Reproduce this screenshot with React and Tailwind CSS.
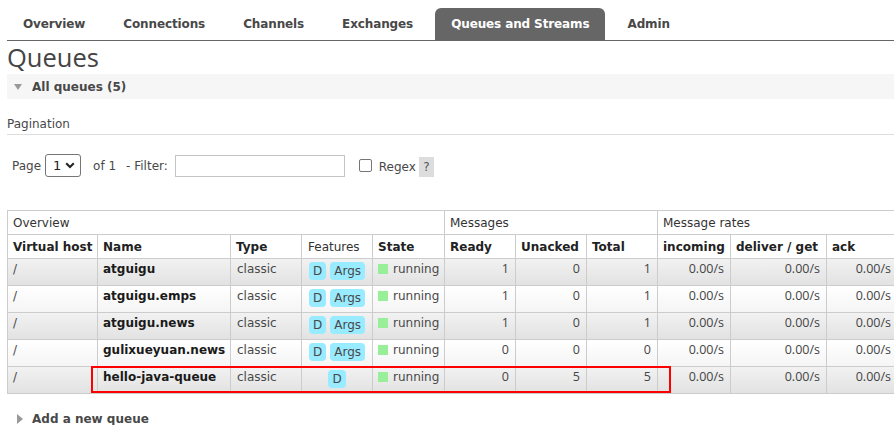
import React from "react";

const tabs = ["Overview", "Connections", "Channels", "Exchanges", "Queues and Streams", "Admin"];

const rows = [
  { name: "atguigu", args: true, ready: 1, unacked: 0, total: 1 },
  { name: "atguigu.emps", args: true, ready: 1, unacked: 0, total: 1 },
  { name: "atguigu.news", args: true, ready: 1, unacked: 0, total: 1 },
  { name: "gulixueyuan.news", args: true, ready: 0, unacked: 0, total: 0 },
  { name: "hello-java-queue", args: false, ready: 0, unacked: 5, total: 5 },
];

const cols = "grid-cols-[90px_133px_71px_71px_72px_71px_71px_71px_73px_96px_71px]";

function Badge({ children }) {
  return (
    <span className="inline-flex h-[18px] items-center rounded-[4px] bg-[#99ebff] px-[4px] text-[12px] leading-[18px] text-[#484848]">
      {children}
    </span>
  );
}

export default function App() {
  const sans = { fontFamily: '"DejaVu Sans", Verdana, sans-serif' };
  return (
    <div
      className="h-[425px] w-[894px] overflow-hidden bg-white text-[12px] text-[#484848]"
      style={sans}
    >
      <div className="pl-[7px]">
        {/* Tabs */}
        <div className="mt-[8px] flex h-[33px] gap-[6px] border-b border-[#666]">
          {tabs.map((t) => {
            const active = t === "Queues and Streams";
            return (
              <div
                key={t}
                className={
                  "h-[32px] px-[16px] text-[12px] font-bold leading-[32px] tracking-[-0.12px] " +
                  (active ? "rounded-t-[6px] bg-[#666] text-white" : "text-[#484848]")
                }
              >
                {t}
              </div>
            );
          })}
        </div>

        {/* Heading */}
        <h1
          className="h-[33px] text-[25.5px] font-normal leading-[33px] text-[#444]"
          style={{ fontFamily: '"Open Sans", sans-serif' }}
        >
          Queues
        </h1>

        {/* Section bar */}
        <div className="flex h-[25px] items-center bg-[#f6f6f6] pl-[7px]">
          <svg width="8" height="6" viewBox="0 0 8 6" className="mr-[10px]">
            <polygon points="0,0 8,0 4,6" fill="#999" />
          </svg>
          <span className="font-bold text-[#484848]">All queues (5)</span>
        </div>

        {/* Pagination */}
        <div className="mt-[15px] border-b border-[#ddd] leading-[20px] text-[#484848]">Pagination</div>

        <div className="mt-[19px] flex h-[23px] items-center pl-[5px]">
          <span>Page</span>
          <div className="ml-[4px] flex h-[23px] w-[36px] items-center justify-between rounded-[3px] border border-[#767676] pl-[7px] pr-[5px] text-[13px] text-[#222]">
            <span>1</span>
            <svg width="10" height="7" viewBox="0 0 10 7">
              <polyline points="1.2,1.2 5,5 8.8,1.2" fill="none" stroke="#222" strokeWidth="2" />
            </svg>
          </div>
          <span className="ml-[12px]">of 1</span>
          <span className="ml-[10px]">- Filter:</span>
          <div className="ml-[7px] h-[22px] w-[170px] border border-[#c4c4c4] bg-white" />
          <div className="ml-[14px] h-[13px] w-[13px] rounded-[2px] border border-[#767676] bg-white" />
          <span className="ml-[7px] mt-[3px]">Regex</span>
          <span className="ml-[3px] mt-[3px] flex h-[20px] w-[15px] items-center justify-center bg-[#ddd] text-[12px] text-[#555]">
            ?
          </span>
        </div>

        {/* Table */}
        <div className="relative mt-[33px]">
          <div className={"grid w-max border-l border-t border-[#ccc] " + cols}>
            {/* header row 1 */}
            <div className="col-span-5 flex h-[24px] items-center border-b border-r border-[#ccc] pl-[5px] text-[#333]">
              Overview
            </div>
            <div className="col-span-3 flex h-[24px] items-center border-b border-r border-[#ccc] pl-[5px] text-[#333]">
              Messages
            </div>
            <div className="col-span-3 flex h-[24px] items-center border-b border-r border-[#ccc] pl-[5px] text-[#333]">
              Message rates
            </div>
            {/* header row 2 */}
            {[
              ["Virtual host", true],
              ["Name", true],
              ["Type", true],
              ["Features", false],
              ["State", true],
              ["Ready", true],
              ["Unacked", true],
              ["Total", true],
              ["incoming", true],
              ["deliver / get", true],
              ["ack", true],
            ].map(([h, b]) => (
              <div
                key={h}
                className={
                  "flex h-[24px] items-center whitespace-nowrap border-b border-r border-[#ccc] " +
                  (b ? "pl-[5px] font-bold text-[#222]" : "pl-[6px] text-[#333]")
                }
              >
                {h}
              </div>
            ))}
            {/* data rows */}
            {rows.map((r, i) => {
              const bg =
                i % 2 === 0
                  ? "bg-gradient-to-b from-[#f2f2f2] to-[#e2e2e2]"
                  : "bg-gradient-to-b from-white to-[#f5f5f5]";
              const cell = "h-[27px] border-b border-r border-[#ccc] pt-[2px] leading-[16px] " + bg;
              const num = cell + " pr-[6px] text-right text-[12.5px] text-[#444]";
              const numStyle = { fontFamily: '"Open Sans", sans-serif' };
              return (
                <React.Fragment key={r.name}>
                  <div className={cell + " pl-[5px]"}>/</div>
                  <div className={cell + " whitespace-nowrap pl-[5px] font-bold text-[#1a1a1a]"}>{r.name}</div>
                  <div className={cell + " pl-[6px]"}>classic</div>
                  <div className={cell + " flex justify-center gap-[4px] pt-[3px]"}>
                    <Badge>D</Badge>
                    {r.args && <Badge>Args</Badge>}
                  </div>
                  <div className={cell + " flex items-start pl-[5px]"}>
                    <span className="mr-[5px] mt-[3px] inline-block h-[10px] w-[10px] bg-[#99ee99]" />
                    <span>running</span>
                  </div>
                  <div className={num} style={numStyle}>{r.ready}</div>
                  <div className={num} style={numStyle}>{r.unacked}</div>
                  <div className={num} style={numStyle}>{r.total}</div>
                  <div className={num} style={numStyle}>0.00/s</div>
                  <div className={num} style={numStyle}>0.00/s</div>
                  <div className={num} style={numStyle}>0.00/s</div>
                </React.Fragment>
              );
            })}
          </div>
          {/* red annotation box */}
          <div className="pointer-events-none absolute left-[84px] top-[156px] h-[27px] w-[580px] border-2 border-[#ff0000]" />
        </div>

        {/* Add a new queue */}
        <div className="mt-[17px] flex h-[16px] items-center pl-[10px]">
          <svg width="6" height="10" viewBox="0 0 6 10" className="mr-[9px]">
            <polygon points="0,0 6,5 0,10" fill="#999" />
          </svg>
          <span className="font-bold text-[#484848]">Add a new queue</span>
        </div>
      </div>
    </div>
  );
}
